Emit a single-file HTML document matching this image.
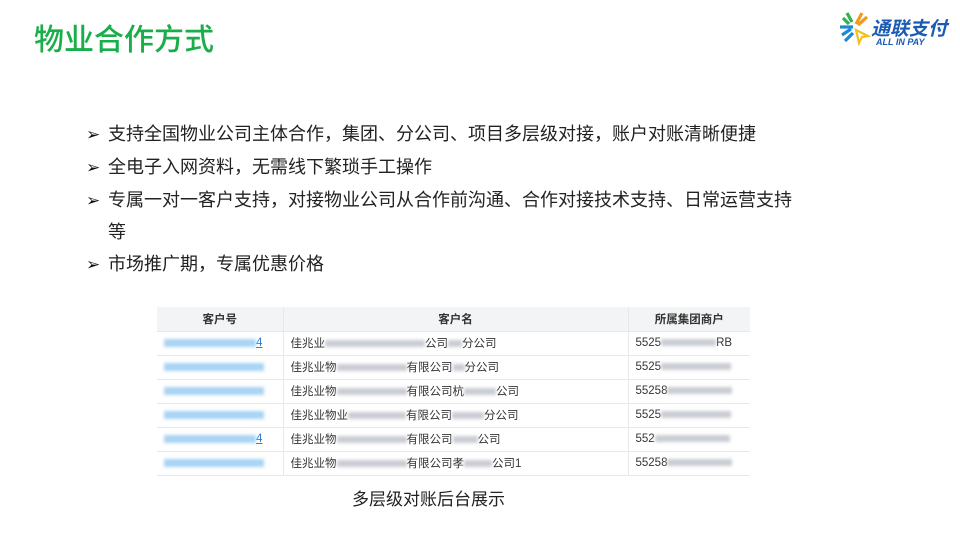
<!DOCTYPE html>
<html><head><meta charset="utf-8"><style>
*{margin:0;padding:0;box-sizing:border-box}
body{width:960px;height:540px;background:#fff;position:relative;overflow:hidden;font-family:"Liberation Sans","Noto Sans CJK SC",sans-serif;color:#222}
.title{position:absolute;left:34px;top:15px;font-size:30px;color:#1aae4a;font-weight:500}
.b{position:absolute;left:86px;font-size:18px;line-height:20px;white-space:nowrap}
.b span.m{display:inline-block;width:22px;font-size:17px;color:#111}
table{position:absolute;left:157px;top:307px;border-collapse:collapse;font-size:11.5px;color:#333}
td,th{height:24px;border-bottom:1px solid #e6e8eb;border-right:1px solid #e6e8eb;padding:0 7px;white-space:nowrap;overflow:hidden}
th{background:#f3f4f6;font-weight:bold;text-align:center}
.c1{width:126px}.c2{width:345px}.c3{width:122px;border-right:none}
.bl{display:inline-block;height:7px;background:#c9cdd3;filter:blur(1.5px);vertical-align:middle}
.lk{display:inline-block;height:8px;width:92px;background:#a9d3f3;filter:blur(1.5px);vertical-align:middle}
.cap{position:absolute;left:352px;top:485px;font-size:17px}
</style></head><body>
<div class="title">物业合作方式</div>
<svg style="position:absolute;left:840px;top:11px" width="112" height="36" viewBox="0 0 112 36">
<path d="M3 7 L9 13 M7 2 L12 11" stroke="#2fb24d" stroke-width="3.2" fill="none"/>
<path d="M22 2 L16 13 M27 6 L18 14" stroke="#f39a1e" stroke-width="3.2" fill="none"/>
<path d="M2 24 L11 18 M5 30 L13 22" stroke="#1a8ad6" stroke-width="3.2" fill="none"/>
<path d="M16 19 L28 25 L22 26 L19 32 Z" stroke="#f3c01e" stroke-width="2.2" fill="none"/>
<path d="M0 16 L13 16" stroke="#1a8ad6" stroke-width="3.2"/>
<text x="31" y="24" font-size="19" font-weight="bold" font-style="italic" fill="#1a5bb3" font-family="Noto Sans CJK SC,sans-serif">通联支付</text>
<text x="36" y="34" font-size="9" font-weight="bold" font-style="italic" fill="#1a5bb3">ALL IN PAY</text>
</svg>
<div class="b" style="top:124px"><span class="m">➢</span>支持全国物业公司主体合作，集团、分公司、项目多层级对接，账户对账清晰便捷</div>
<div class="b" style="top:157px"><span class="m">➢</span>全电子入网资料，无需线下繁琐手工操作</div>
<div class="b" style="top:190px"><span class="m">➢</span>专属一对一客户支持，对接物业公司从合作前沟通、合作对接技术支持、日常运营支持</div>
<div class="b" style="top:222px;left:108px">等</div>
<div class="b" style="top:254px"><span class="m">➢</span>市场推广期，专属优惠价格</div>
<table>
<tr><th class="c1">客户号</th><th class="c2">客户名</th><th class="c3">所属集团商户</th></tr>
<tr><td><span class="lk"></span><span style="color:#2a7fd4;text-decoration:underline">4</span></td><td>佳兆业<span class="bl" style="width:100px"></span>公司<span class="bl" style="width:14px"></span>分公司</td><td class="c3">5525<span class="bl" style="width:55px"></span>RB</td></tr>
<tr><td><span class="lk" style="width:100px"></span></td><td>佳兆业物<span class="bl" style="width:70px"></span>有限公司<span class="bl" style="width:12px"></span>分公司</td><td class="c3">5525<span class="bl" style="width:70px"></span></td></tr>
<tr><td><span class="lk" style="width:100px"></span></td><td>佳兆业物<span class="bl" style="width:70px"></span>有限公司杭<span class="bl" style="width:32px"></span>公司</td><td class="c3">55258<span class="bl" style="width:65px"></span></td></tr>
<tr><td><span class="lk" style="width:100px"></span></td><td>佳兆业物业<span class="bl" style="width:58px"></span>有限公司<span class="bl" style="width:32px"></span>分公司</td><td class="c3">5525<span class="bl" style="width:70px"></span></td></tr>
<tr><td><span class="lk"></span><span style="color:#2a7fd4;text-decoration:underline">4</span></td><td>佳兆业物<span class="bl" style="width:70px"></span>有限公司<span class="bl" style="width:25px"></span>公司</td><td class="c3">552<span class="bl" style="width:75px"></span></td></tr>
<tr><td><span class="lk" style="width:100px"></span></td><td>佳兆业物<span class="bl" style="width:70px"></span>有限公司孝<span class="bl" style="width:28px"></span>公司1</td><td class="c3">55258<span class="bl" style="width:65px"></span></td></tr>
</table>
<div class="cap">多层级对账后台展示</div>
</body></html>
